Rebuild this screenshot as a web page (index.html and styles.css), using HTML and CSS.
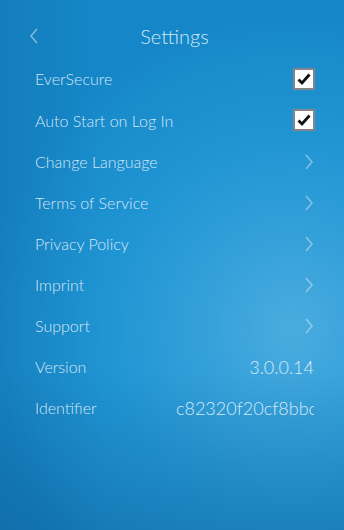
FILE: index.html
```html
<!DOCTYPE html>
<html lang="en">
<head>
  <meta charset="UTF-8">
  <meta name="viewport" content="width=device-width, initial-scale=1.0">
  <title>Settings</title>
  <link rel="stylesheet" href="styles.css">
</head>
<body>
  <div class="settings-screen">
    <div class="header">
      <span class="back-button">
        <svg width="10" height="16" viewBox="0 0 10 16"><polyline points="8,1 2,8 8,15" fill="none" stroke="currentColor" stroke-width="1.6"/></svg>
      </span>
      <h1 class="title">Settings</h1>
    </div>

    <ul class="settings-list">
      <li class="setting-row">
        <span class="setting-label">EverSecure</span>
        <span class="check-box">
          <svg width="16" height="16" viewBox="0 0 16 16"><polyline points="2.5,8.5 6,12 13.5,3.5" fill="none" stroke="#111" stroke-width="2.8"/></svg>
        </span>
      </li>
      <li class="setting-row row-tall">
        <span class="setting-label">Auto Start on Log In</span>
        <span class="check-box">
          <svg width="16" height="16" viewBox="0 0 16 16"><polyline points="2.5,8.5 6,12 13.5,3.5" fill="none" stroke="#111" stroke-width="2.8"/></svg>
        </span>
      </li>
      <li class="setting-row">
        <span class="setting-label">Change Language</span>
        <span class="chevron"><svg width="10" height="16" viewBox="0 0 10 16"><polyline points="2,1 8,8 2,15" fill="none" stroke="currentColor" stroke-width="1.6"/></svg></span>
      </li>
      <li class="setting-row">
        <span class="setting-label">Terms of Service</span>
        <span class="chevron"><svg width="10" height="16" viewBox="0 0 10 16"><polyline points="2,1 8,8 2,15" fill="none" stroke="currentColor" stroke-width="1.6"/></svg></span>
      </li>
      <li class="setting-row">
        <span class="setting-label">Privacy Policy</span>
        <span class="chevron"><svg width="10" height="16" viewBox="0 0 10 16"><polyline points="2,1 8,8 2,15" fill="none" stroke="currentColor" stroke-width="1.6"/></svg></span>
      </li>
      <li class="setting-row">
        <span class="setting-label">Imprint</span>
        <span class="chevron"><svg width="10" height="16" viewBox="0 0 10 16"><polyline points="2,1 8,8 2,15" fill="none" stroke="currentColor" stroke-width="1.6"/></svg></span>
      </li>
      <li class="setting-row">
        <span class="setting-label">Support</span>
        <span class="chevron"><svg width="10" height="16" viewBox="0 0 10 16"><polyline points="2,1 8,8 2,15" fill="none" stroke="currentColor" stroke-width="1.6"/></svg></span>
      </li>
      <li class="setting-row">
        <span class="setting-label">Version</span>
        <span class="setting-value">3.0.0.14</span>
      </li>
      <li class="setting-row">
        <span class="setting-label">Identifier</span>
        <span class="setting-value">c82320f20cf8bbc</span>
      </li>
    </ul>
  </div>
</body>
</html>
```

FILE: styles.css
```css
html, body {
  height: 100%;
}

body {
  margin: 0;
  font-family: Lato, "Open Sans", Arial, sans-serif;
  font-weight: 300;
  color: rgba(238, 247, 253, 0.88);
  background:
    linear-gradient(to bottom, rgba(10, 60, 110, 0) 70%, rgba(10, 60, 110, 0.22) 100%),
    linear-gradient(to right, rgba(10, 60, 110, 0.12) 0%, rgba(10, 60, 110, 0) 30%),
    radial-gradient(ellipse 90% 60% at 85% 62%, #4aacdf 0%, #33a0d9 30%, #2095d3 60%, #1a8dcd 85%, #1587c8 100%);
  overflow: hidden;
}

.settings-screen {
  padding: 0 30px 0 35px;
}

.header {
  display: flex;
  align-items: center;
  justify-content: center;
  position: relative;
  padding-top: 17px;
  height: 38px;
}

.back-button {
  position: absolute;
  left: -6px;
  top: 28px;
  color: rgba(230, 242, 250, 0.5);
}

.title {
  margin: 0;
  font-size: 20px;
  font-weight: 300;
}

.settings-list {
  list-style: none;
  margin: 3px 0 0 0;
  padding: 0;
}

.setting-row {
  display: flex;
  align-items: center;
  justify-content: space-between;
  height: 41px;
  font-size: 16px;
}

.row-tall {
  height: 42px;
}

.check-box {
  width: 18px;
  height: 18px;
  border: 2px solid #858585;
  background: #fff;
  display: flex;
  align-items: center;
  justify-content: center;
  margin-right: -1px;
}

.chevron {
  display: flex;
  color: rgba(230, 242, 250, 0.45);
}

.setting-value {
  width: 138px;
  text-align: right;
  white-space: nowrap;
  overflow: hidden;
  font-size: 18px;
}
```
